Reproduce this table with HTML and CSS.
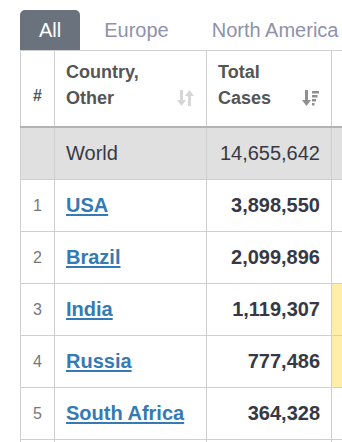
FILE: index.html
```html
<!DOCTYPE html>
<html>
<head>
<meta charset="utf-8">
<link rel="stylesheet" href="styles.css">
</head>
<body>
<div class="wrap">
  <div class="tabs">
    <div class="tab active">All</div>
    <div class="tab">Europe</div>
    <div class="tab">North America</div>
  </div>
  <table class="tbl">
    <colgroup>
      <col class="c-num"><col class="c-country"><col class="c-total"><col class="c-new">
    </colgroup>
    <thead>
      <tr>
        <th class="h-num">#</th>
        <th><div class="hcell"><span>Country,<br>Other</span>
          <svg class="sort" width="17" height="16" viewBox="0 0 17 16"><g fill="#d6d6d6"><rect x="3" y="0" width="3" height="11"/><path d="M0 10h9l-4.5 6z"/><rect x="11" y="5" width="3" height="11"/><path d="M8 6h9l-4.5-6z"/></g></svg>
        </div></th>
        <th><div class="hcell"><span>Total<br>Cases</span>
          <svg class="sort" width="17" height="16" viewBox="0 0 17 16"><g fill="#8f8f8f"><rect x="3" y="0" width="3" height="11"/><path d="M0 10h9l-4.5 6z"/><rect x="10" y="1" width="7" height="2.5"/><rect x="10" y="5" width="5.5" height="2.5"/><rect x="10" y="9" width="4" height="2.5"/><rect x="10" y="13" width="2.5" height="2.5"/></g></svg>
        </div></th>
        <th></th>
      </tr>
    </thead>
    <tbody>
      <tr class="world"><td></td><td class="name">World</td><td class="num">14,655,642</td><td></td></tr>
      <tr><td class="rank">1</td><td class="name"><a href="#">USA</a></td><td class="num bold">3,898,550</td><td></td></tr>
      <tr><td class="rank">2</td><td class="name"><a href="#">Brazil</a></td><td class="num bold">2,099,896</td><td></td></tr>
      <tr><td class="rank">3</td><td class="name"><a href="#">India</a></td><td class="num bold">1,119,307</td><td class="new"></td></tr>
      <tr><td class="rank">4</td><td class="name"><a href="#">Russia</a></td><td class="num bold">777,486</td><td class="new"></td></tr>
      <tr><td class="rank">5</td><td class="name"><a href="#">South Africa</a></td><td class="num bold">364,328</td><td></td></tr>
      <tr><td></td><td></td><td></td><td></td></tr>
    </tbody>
  </table>
</div>
</body>
</html>
```
FILE: styles.css
```css
html, body {
  margin: 0;
  padding: 0;
  overflow: hidden;
  background: #fff;
}
body {
  font-family: "Liberation Sans", Arial, sans-serif;
  color: #363945;
}
.wrap {
  padding: 10px 0 0 20px;
  width: 600px;
}
.tabs {
  display: flex;
  gap: 5px;
  height: 40px;
}
.tab {
  padding: 0 19px;
  font-size: 20px;
  line-height: 40px;
  color: #8e92aa;
  border-radius: 5px 5px 0 0;
}
.tab.active {
  background: #6a727e;
  color: #fff;
}
.tbl {
  border-collapse: collapse;
  table-layout: fixed;
  width: 431px;
}
.c-num { width: 34px; }
.c-country { width: 152px; }
.c-total { width: 125px; }
.c-new { width: 120px; }
.tbl th, .tbl td {
  border: 1px solid #cfcfcf;
}
.tbl thead th {
  height: 58px;
  border-bottom: 2px solid #b3b3b3;
  color: #555;
  font-size: 18px;
  font-weight: bold;
  text-align: left;
  vertical-align: bottom;
  padding: 0 12px 15px 11px;
  line-height: 26px;
}
.tbl thead th.h-num {
  font-size: 16px;
  text-align: center;
  padding: 0 0 17px;
}
.hcell {
  display: flex;
  justify-content: space-between;
  align-items: flex-end;
}
.sort {
  margin-bottom: 5px;
  flex: none;
}
.tbl td {
  height: 51px;
  padding: 0 11px;
  font-size: 20px;
  vertical-align: middle;
}
.tbl tr.world td {
  background: #e0e0e0;
}
.tbl td.rank {
  font-size: 16px;
  color: #777;
  text-align: center;
  padding: 0;
}
.tbl td.num {
  text-align: right;
}
.tbl td.bold {
  font-weight: bold;
}
.tbl td.name a {
  color: #337ab7;
  font-weight: bold;
  text-decoration: underline;
  text-underline-offset: 2px;
}
.tbl td.new {
  background: #ffeeaa;
}
```
